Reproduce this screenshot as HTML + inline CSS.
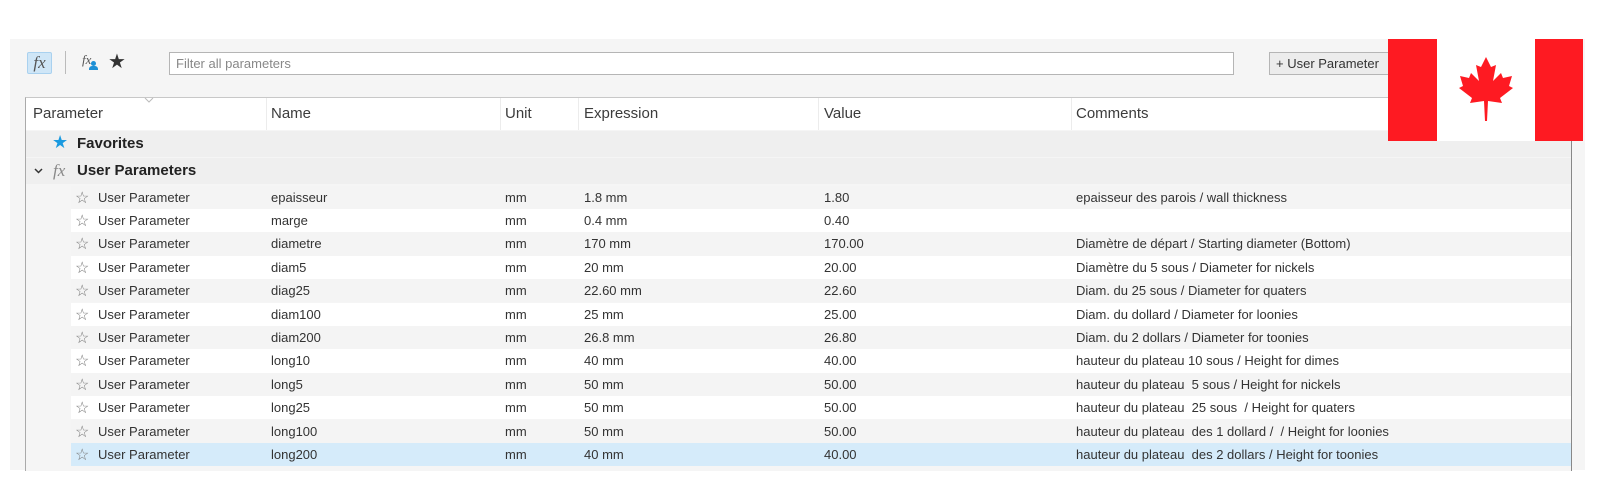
<!DOCTYPE html>
<html><head><meta charset="utf-8"><style>
*{margin:0;padding:0;box-sizing:border-box}
body{width:1600px;height:485px;background:#fff;position:relative;overflow:hidden;font-family:"Liberation Sans",sans-serif;color:#3c3c3c}
.panel{position:absolute;left:10px;top:39px;width:1575px;height:431px;background:#f5f5f5}
.abs{position:absolute}
.fxb{left:27px;top:52px;width:25px;height:22px;background:#cfe6f7;border:1px solid #a9d1ef;border-radius:2px;font:italic 17px "Liberation Serif",serif;color:#555;text-align:center;line-height:19px}
.filter{left:169px;top:52px;width:1065px;height:23px;background:#fff;border:1px solid #b5b5b5;font-size:13px;color:#888;padding-left:6px;line-height:21px}
.btn{left:1269px;top:52px;width:130px;height:23px;background:#ececec;border:1px solid #b5b5b5;font-size:13px;color:#333;padding-left:6px;line-height:21px}
.table{left:25px;top:97px;width:1547px;height:374px;border-left:1px solid #aaa;border-top:1px solid #c8c8c8;border-right:1px solid #888;background:#f5f5f5}
.hdr{left:26px;top:98px;width:1545px;height:32px;background:#fff;font-size:15px}
.hdr span{position:absolute;top:7px}
.hdr i{position:absolute;top:0;width:1px;height:32px;background:#ececec}
.grp{left:26px;width:1545px;height:26px;background:#efefef;font-size:15px;font-weight:bold;color:#222}
.row{left:71px;width:1500px;height:23.4px;font-size:13px;color:#333}
.row span{position:absolute;top:4px;white-space:pre}
.g{background:#f4f4f4}.w{background:#fff}.s{background:#d5ebfa}
</style></head><body>
<div class="panel"></div>
<div class="abs fxb">fx</div>
<div class="abs" style="left:65px;top:51px;width:1px;height:23px;background:#bbb"></div>
<div class="abs" style="left:82px;top:52px;font:italic 13px 'Liberation Serif',serif;color:#555">fx</div>
<div class="abs" style="left:91px;top:61px;width:5px;height:5px;background:#1e90d6;border-radius:3px"></div>
<div class="abs" style="left:89px;top:66px;width:9px;height:4px;background:#1e90d6;border-radius:3px 3px 0 0"></div>
<div class="abs" style="left:108px;top:49px;font-size:20px;color:#333">★</div>
<div class="abs filter">Filter all parameters</div>
<div class="abs btn">+ User Parameter</div>
<div class="abs table"></div>
<div class="abs hdr">
<span style="left:7px">Parameter</span><i style="left:240px"></i>
<span style="left:245px">Name</span><i style="left:474px"></i>
<span style="left:479px">Unit</span><i style="left:552px"></i>
<span style="left:558px">Expression</span><i style="left:792px"></i>
<span style="left:798px">Value</span><i style="left:1045px"></i>
<span style="left:1050px">Comments</span>
<svg style="position:absolute;left:118px;top:-1px" width="10" height="6"><path d="M1 1 L5 5 L9 1" fill="none" stroke="#bbb" stroke-width="1"/></svg>
</div>
<div class="abs grp" style="top:131px"><span style="position:absolute;left:26px;top:1px;color:#1a9ae0;font-size:18px;font-weight:normal">★</span><span style="position:absolute;left:51px;top:4px">Favorites</span></div>
<div class="abs grp" style="top:158px"><svg style="position:absolute;left:8px;top:10px" width="9" height="6"><path d="M1 1 L4.5 4.5 L8 1" fill="none" stroke="#333" stroke-width="1.5"/></svg><span style="position:absolute;left:27px;top:3px;font:italic 17px 'Liberation Serif',serif;color:#888">fx</span><span style="position:absolute;left:51px;top:4px">User Parameters</span></div>
<div id="rows"></div>
<div class="abs" style="left:1388px;top:39px;width:195px;height:102px;background:#fff"></div>
<div class="abs" style="left:1388px;top:39px;width:49px;height:102px;background:#fe1a22"></div>
<div class="abs" style="left:1535px;top:39px;width:48px;height:102px;background:#fe1a22"></div>
<svg class="abs" style="left:1455px;top:55px" width="62" height="68" viewBox="0 0 62 68"><path fill="#fe1a22" d="M31 2 L36 12 L41 10 L38 26 L46 18 L48 23 L57 21 L54 31 L58 33 L45 43 L47 48 L33 46 L32 66 L30 66 L29 46 L15 48 L17 43 L4 33 L8 31 L5 21 L14 23 L16 18 L24 26 L21 10 L26 12 Z"/></svg>
<script>
var d=[["epaisseur","1.8 mm","1.80","epaisseur des parois / wall thickness"],["marge","0.4 mm","0.40",""],["diametre","170 mm","170.00","Diamètre de départ / Starting diameter (Bottom)"],["diam5","20 mm","20.00","Diamètre du 5 sous / Diameter for nickels"],["diag25","22.60 mm","22.60","Diam. du 25 sous / Diameter for quaters"],["diam100","25 mm","25.00","Diam. du dollard / Diameter for loonies"],["diam200","26.8 mm","26.80","Diam. du 2 dollars / Diameter for toonies"],["long10","40 mm","40.00","hauteur du plateau 10 sous / Height for dimes"],["long5","50 mm","50.00","hauteur du plateau  5 sous / Height for nickels"],["long25","50 mm","50.00","hauteur du plateau  25 sous  / Height for quaters"],["long100","50 mm","50.00","hauteur du plateau  des 1 dollard /  / Height for loonies"],["long200","40 mm","40.00","hauteur du plateau  des 2 dollars / Height for toonies"]];
var h="";d.forEach(function(r,i){var c=i==11?"s":(i%2?"w":"g");
h+='<div class="abs row '+c+'" style="top:'+(185.5+i*23.4)+'px"><span style="left:4px;top:2px;font-size:16px;color:#777">☆</span><span style="left:27px">User Parameter</span><span style="left:200px">'+r[0]+'</span><span style="left:434px">mm</span><span style="left:513px">'+r[1]+'</span><span style="left:753px">'+r[2]+'</span><span style="left:1005px">'+r[3]+'</span></div>';});
document.getElementById("rows").innerHTML=h;
</script>
</body></html>
